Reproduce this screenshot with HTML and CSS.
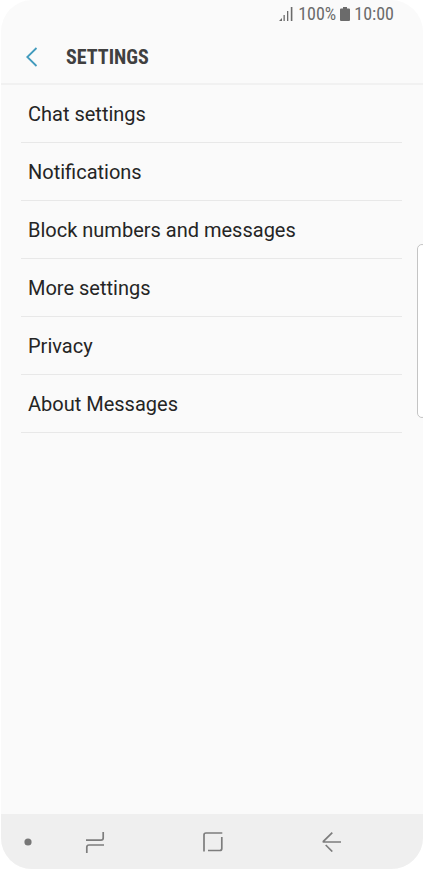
FILE: index.html
```html
<!DOCTYPE html>
<html lang="en">
<head>
  <meta charset="UTF-8">
  <meta name="viewport" content="width=device-width, initial-scale=1.0">
  <title>Settings</title>
  <link rel="stylesheet" href="styles.css">
</head>
<body>
  <div class="phone">
    <div class="status-bar">
      <svg class="signal" width="14" height="14" viewBox="0 0 14 14" fill="#6b6b6b">
        <path d="M0 14L3 11V14Z"/>
        <rect x="4.5" y="8" width="1.3" height="6"/>
        <rect x="8" y="4" width="1.3" height="10"/>
        <rect x="11.8" y="0" width="1.6" height="14"/>
      </svg>
      <span class="percent">100%</span>
      <svg class="battery" width="10" height="14" viewBox="0 0 10 14" fill="#6b6b6b">
        <path d="M3 0H7V1.5H9Q10 1.5 10 2.5V13Q10 14 9 14H1Q0 14 0 13V2.5Q0 1.5 1 1.5H3Z"/>
      </svg>
      <span class="time">10:00</span>
    </div>

    <header class="title-bar">
      <button class="back" aria-label="Back">
        <svg width="12" height="20" viewBox="0 0 12 20" fill="none" stroke="#429bbd" stroke-width="1.8">
          <path d="M10.5 1L1.3 10L10.5 19"/>
        </svg>
      </button>
      <h1>SETTINGS</h1>
    </header>

    <nav class="settings">
      <a class="item" href="#">Chat settings</a>
      <a class="item" href="#">Notifications</a>
      <a class="item" href="#">Block numbers and messages</a>
      <a class="item" href="#">More settings</a>
      <a class="item" href="#">Privacy</a>
      <a class="item" href="#">About Messages</a>
    </nav>

    <div class="edge-handle"></div>

    <footer class="nav-bar">
      <button class="nav-button" aria-label="Hide navigation bar">
        <svg width="8" height="8" viewBox="0 0 8 8"><circle cx="4" cy="4" r="3.6" fill="#777"/></svg>
      </button>
      <button class="nav-button" aria-label="Recent apps">
        <svg width="20" height="22" viewBox="0 0 20 22" fill="none" stroke="#7d7d7d" stroke-width="1.7">
          <path d="M1 9.2H16Q18.2 9.2 18.2 7V1"/>
          <path d="M19 14H4Q1.8 14 1.8 16.2V22"/>
        </svg>
      </button>
      <button class="nav-button" aria-label="Home">
        <svg width="20" height="20" viewBox="0 0 20 20" fill="none" stroke="#7d7d7d" stroke-width="1.7">
          <path d="M1 19.5V3Q1 1 3 1H19.3"/>
          <path d="M18.8 5V16.5Q18.8 18.5 16.8 18.5H5"/>
        </svg>
      </button>
      <button class="nav-button" aria-label="Back">
        <svg width="20" height="20" viewBox="0 0 20 20" fill="none" stroke="#7d7d7d" stroke-width="1.7">
          <path d="M10.3 .6L1.4 9.3Q1 10 2 10H19"/>
          <path d="M3.7 13L10.3 19.5"/>
        </svg>
      </button>
    </footer>
  </div>
</body>
</html>
```
FILE: styles.css
```css
* {
  box-sizing: border-box;
}

body {
  margin: 0;
  background-color: #fff;
  font-family: Roboto, Arial, sans-serif;
  color: #252525;
}

button {
  display: flex;
  padding: 0;
  border: none;
  background: none;
  cursor: pointer;
}

.phone {
  position: relative;
  display: flex;
  flex-direction: column;
  min-height: 100vh;
  background-color: #fafafa;
  border-left: 1px solid #fff;
  border-bottom: 1px solid #fff;
  border-radius: 32px;
  overflow: hidden;
}

/* Status bar */
.status-bar {
  display: flex;
  align-items: center;
  justify-content: flex-end;
  height: 28px;
  padding-right: 29px;
  font-family: "Roboto Condensed", Roboto, sans-serif;
  font-size: 18px;
  line-height: 28px;
  color: #6b6b6b;
}

.percent {
  margin: 0 4px 0 5px;
}

.time {
  margin-left: 4px;
}

/* Title bar */
.title-bar {
  display: flex;
  align-items: center;
  gap: 28px;
  height: 57px;
  padding: 2px 0 0 25px;
  border-bottom: 2px solid #f1f1f1;
}

h1 {
  margin: 0;
  font-family: "Roboto Condensed", Roboto, sans-serif;
  font-size: 20px;
  line-height: 24px;
  color: #404040;
}

/* List */
.settings {
  flex: 1;
  padding: 0 21px 0 20px;
}

.item {
  display: block;
  padding: 17px 7px 16px;
  border-bottom: 1px solid #e8e8e8;
  font-size: 20px;
  line-height: 24px;
  color: #252525;
  text-decoration: none;
}

.edge-handle {
  position: absolute;
  top: 244px;
  right: -4px;
  width: 10px;
  height: 174px;
  border: 1px solid #c4c4c4;
  border-radius: 6px;
  background-color: #fff;
}

/* Navigation bar */
.nav-bar {
  display: grid;
  grid-template-columns: 35px 1fr 1fr 1fr 32px;
  height: 55px;
  background-color: #efefef;
}

.nav-button {
  align-items: center;
  justify-content: center;
}

.nav-button:first-child {
  justify-content: flex-end;
  padding-right: 4px;
}
```
